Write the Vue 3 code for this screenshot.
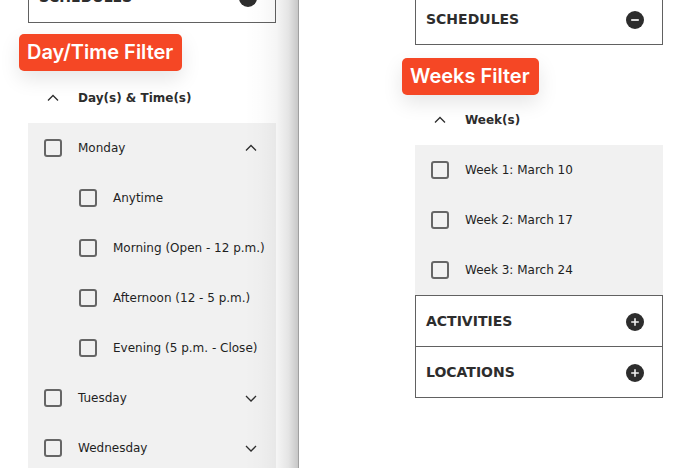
<script setup>
import { reactive } from 'vue'

const days = reactive([
  {
    name: 'Monday',
    open: true,
    times: ['Anytime', 'Morning (Open - 12 p.m.)', 'Afternoon (12 - 5 p.m.)', 'Evening (5 p.m. - Close)'],
  },
  { name: 'Tuesday', open: false, times: [] },
  { name: 'Wednesday', open: false, times: [] },
])
const weeks = ['Week 1: March 10', 'Week 2: March 17', 'Week 3: March 24']
const sections = ['Activities', 'Locations']
</script>

<template>
  <main class="page">
    <section class="pane pane-days">
      <strong class="tag tag-days">Day/Time Filter</strong>
      <button class="bar" type="button" aria-expanded="true">
        <span>Schedules</span>
        <svg class="disc" viewBox="0 0 18 18" aria-hidden="true">
          <circle cx="9" cy="9" r="9" fill="#2d2d2d" />
          <path d="M5.2 9h7.6" stroke="#f1f1f1" stroke-width="1.8" />
        </svg>
      </button>
      <button class="group" type="button" aria-expanded="true">
        <svg class="chevron" viewBox="0 0 12 8" aria-hidden="true"><path d="M1 6.5l5-5 5 5" /></svg>
        <span>Day(s) &amp; Time(s)</span>
      </button>
      <div class="options">
        <template v-for="day in days" :key="day.name">
          <div class="row">
            <label class="choice"><input type="checkbox" /><span>{{ day.name }}</span></label>
            <button
              class="toggle"
              type="button"
              :aria-label="day.name"
              :aria-expanded="day.open"
              @click="day.open = !day.open"
            >
              <svg class="chevron" viewBox="0 0 12 8" aria-hidden="true">
                <path :d="day.open ? 'M1 6.5l5-5 5 5' : 'M1 2l5 5 5-5'" />
              </svg>
            </button>
          </div>
          <template v-if="day.open">
            <div v-for="time in day.times" :key="time" class="row nested">
              <label class="choice"><input type="checkbox" /><span>{{ time }}</span></label>
            </div>
          </template>
        </template>
      </div>
    </section>

    <section class="pane pane-weeks">
      <strong class="tag tag-weeks">Weeks Filter</strong>
      <button class="bar" type="button" aria-expanded="true">
        <span>Schedules</span>
        <svg class="disc" viewBox="0 0 18 18" aria-hidden="true">
          <circle cx="9" cy="9" r="9" fill="#2d2d2d" />
          <path d="M5.2 9h7.6" stroke="#f1f1f1" stroke-width="1.8" />
        </svg>
      </button>
      <button class="group" type="button" aria-expanded="true">
        <svg class="chevron" viewBox="0 0 12 8" aria-hidden="true"><path d="M1 6.5l5-5 5 5" /></svg>
        <span>Week(s)</span>
      </button>
      <div class="options">
        <div v-for="week in weeks" :key="week" class="row">
          <label class="choice"><input type="checkbox" /><span>{{ week }}</span></label>
        </div>
      </div>
      <div class="sections">
        <button v-for="name in sections" :key="name" class="bar" type="button" aria-expanded="false">
          <span>{{ name }}</span>
          <svg class="disc" viewBox="0 0 18 18" aria-hidden="true">
            <circle cx="9" cy="9" r="9" fill="#2d2d2d" />
            <path d="M5.2 9h7.6M9 5.2v7.6" stroke="#f1f1f1" stroke-width="1.6" />
          </svg>
        </button>
      </div>
    </section>
  </main>
</template>

<style>
body {
  margin: 0;
  background: #fff;
}
</style>

<style scoped>
.page {
  display: grid;
  grid-template-columns: 299fr 385fr;
  height: 100vh;
  overflow: hidden;
  font-family: Verdana, "DejaVu Sans", sans-serif;
  font-size: 12px;
  color: #1f1f1f;
}
.pane {
  position: relative;
  display: flex;
  flex-direction: column;
  min-width: 0;
  min-height: 0;
  overflow: hidden;
  box-sizing: border-box;
}
.pane > * {
  flex-shrink: 0;
}
.pane-days {
  padding: 0 22px 0 28px;
  border-right: 1px solid #a0a0a0;
}
.pane-days::after {
  content: "";
  position: absolute;
  inset: 0 0 0 auto;
  width: 54px;
  background: linear-gradient(to right, transparent, rgba(0, 0, 0, 0.01) 30%, rgba(0, 0, 0, 0.04) 60%, rgba(0, 0, 0, 0.1) 82%, rgba(0, 0, 0, 0.22));
  pointer-events: none;
}
.pane-weeks {
  padding: 0 21px 0 116px;
}
button {
  margin: 0;
  border: 0;
  background: none;
  font: inherit;
  color: inherit;
  text-align: left;
  cursor: pointer;
}
.bar {
  display: flex;
  align-items: center;
  justify-content: space-between;
  box-sizing: border-box;
  width: 100%;
  height: 52px;
  padding: 0 18px 0 10px;
  border: 1px solid #616161;
  background: #fff;
  color: #2d2d2d;
  font-size: 14px;
  font-weight: 700;
  text-transform: uppercase;
}
.pane-days > .bar {
  margin-top: -29px;
}
.pane-weeks > .bar {
  margin-top: -7px;
}
.sections .bar + .bar {
  margin-top: -1px;
}
.disc {
  width: 18px;
  height: 18px;
  margin-top: 2px;
}
.group {
  display: flex;
  align-items: center;
  gap: 19px;
  height: 50px;
  margin-top: 50px;
  padding: 0 19px;
  color: #2d2d2d;
  font-weight: 700;
}
.chevron {
  display: block;
  width: 12px;
  height: 8px;
  fill: none;
  stroke: #2d2d2d;
  stroke-width: 1.3;
}
.options {
  background: #f1f1f1;
}
.row {
  display: flex;
  align-items: center;
  justify-content: space-between;
  height: 50px;
  padding: 0 19px 0 16px;
}
.row.nested {
  padding: 0 0 0 51px;
}
.choice {
  display: flex;
  align-items: center;
  gap: 16px;
  white-space: nowrap;
}
.choice input {
  appearance: none;
  box-sizing: border-box;
  flex: none;
  width: 18px;
  height: 18px;
  margin: 0;
  border: 2px solid #666;
  border-radius: 3px;
}
.choice input:checked {
  background: #666;
}
.toggle {
  padding: 0;
}
.tag {
  position: absolute;
  z-index: 1;
  box-sizing: border-box;
  height: 37px;
  padding: 0 9px 0 8px;
  border-radius: 5px;
  background: #f54725;
  box-shadow: 0 8px 20px rgba(0, 0, 0, 0.1);
  color: #fff;
  font-family: Inter, "Liberation Sans", sans-serif;
  font-size: 20px;
  font-weight: 600;
  line-height: 37px;
  white-space: nowrap;
}
.tag-days {
  top: 34px;
  left: 19px;
}
.tag-weeks {
  top: 58px;
  left: 103px;
}
</style>
